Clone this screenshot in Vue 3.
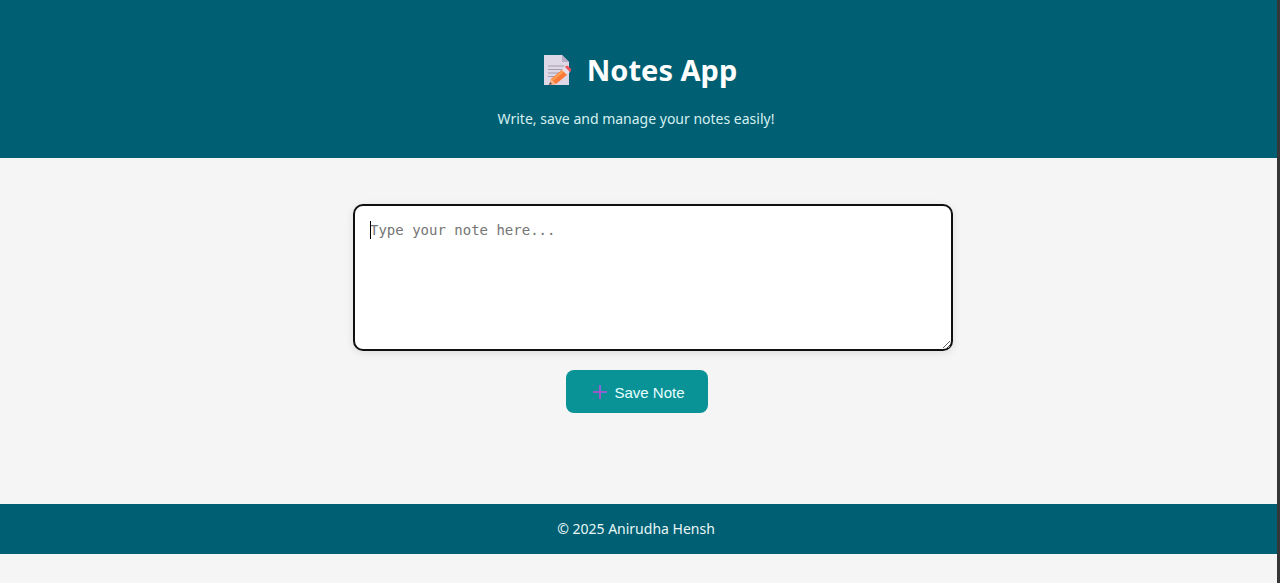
<script setup>
import { ref, onMounted } from 'vue'

const note = ref('')
const notes = ref([])
const editor = ref(null)

function saveNote() {
  const text = note.value.trim()
  if (!text) return
  notes.value.push(text)
  note.value = ''
}

onMounted(() => editor.value.focus())
</script>

<template>
  <div class="page">
    <header class="bar header">
      <h1 class="title">
        <svg class="memo" viewBox="0 0 28 32" aria-hidden="true">
          <path d="M1 1h18l7 7v23H1z" fill="#ded8e6" />
          <path d="M19 1v7h7z" fill="#b9adc6" />
          <path d="M5 12h16M5 15.500h14M5 19h11M5 22.500h7" stroke="#a49bb0" stroke-width="1.200" />
          <path d="M8 25l12-10 5 5-12 10-6 1z" fill="#fb7a3a" />
          <path d="M9.500 26l12-10" stroke="#ffa052" stroke-width="2" />
          <path d="M19 16l3-3 5 5-3 3z" fill="#e6dfea" />
          <path d="M22 13l1-1q1-1 2 0l3 3q1 1 0 2l-1 1z" fill="#f0505a" />
          <path d="M8 25l-2 6 7-1z" fill="#ffb488" />
          <path d="M7 28l-1 3 3-1z" fill="#59445f" />
        </svg>
        <span>Notes App</span>
      </h1>
      <p class="tagline">Write, save and manage your notes easily!</p>
    </header>

    <main class="main">
      <form @submit.prevent="saveNote">
        <div class="field">
          <textarea
            ref="editor"
            v-model="note"
            class="editor"
            aria-label="Note"
            placeholder="Type your note here..."
          ></textarea>
          <span v-if="!note" class="caret"></span>
        </div>
        <button class="save" type="submit">
          <svg class="plus" viewBox="0 0 14 14" aria-hidden="true">
            <path d="M7 0v14M0 7h14" stroke="#9a58c8" stroke-width="2" />
            <path d="M7.500 0v6M8 7.500h6" stroke="#7b6fe0" stroke-width="1" />
          </svg>
          <span>Save Note</span>
        </button>
      </form>
      <ul v-if="notes.length" class="notes">
        <li v-for="(item, i) in notes" :key="i">{{ item }}</li>
      </ul>
    </main>

    <footer class="bar footer">© 2025 Anirudha Hensh</footer>
  </div>
</template>

<style>
body {
  background: #f5f5f5;
}
</style>

<style scoped>
.page {
  min-height: 100vh;
  box-sizing: border-box;
  border-right: 3px solid #363636;
  background: #f5f5f5;
  font-family: "Noto Sans", "Open Sans", sans-serif;
}
.bar {
  background: #005f73;
  color: #fff;
  text-align: center;
  padding-right: 5px;
}
.header {
  padding-top: 48px;
  padding-bottom: 28px;
}
.title {
  display: flex;
  align-items: center;
  justify-content: center;
  gap: 16px;
  margin: 0;
  padding-left: 8px;
  font-size: 29px;
  line-height: 44px;
}
.memo {
  width: 28px;
  height: 32px;
}
.tagline {
  margin: 16px 0 0;
  font-size: 14px;
  line-height: 22px;
  color: #d5f0f0;
}
.main {
  max-width: 568px;
  margin: 0 auto;
  padding: 46px 3px 91px 0;
  text-align: center;
}
.field {
  position: relative;
  display: flex;
  margin-right: -32px;
}
.editor {
  flex: 1;
  box-sizing: border-box;
  height: 147px;
  padding: 15px;
  border: 2px solid #101010;
  border-radius: 10px;
  outline: none;
  background: #fff;
  box-shadow: 0 2px 8px rgba(0, 0, 0, 0.1);
  font-family: "DejaVu Sans Mono", "Liberation Mono", monospace;
  font-size: 14px;
  line-height: 19px;
  caret-color: transparent;
  resize: vertical;
}
.editor::placeholder {
  color: #757575;
}
.caret {
  position: absolute;
  top: 17px;
  left: 17px;
  width: 1px;
  height: 18px;
  background: #000;
}
.save {
  display: inline-flex;
  align-items: center;
  gap: 7px;
  margin-top: 19px;
  padding: 1px 23px 0 27px;
  height: 43px;
  border: 0;
  border-radius: 8px;
  background: #0a9396;
  color: #e9ffff;
  font-family: "Liberation Sans", Arial, sans-serif;
  font-size: 15px;
  cursor: pointer;
}
.plus {
  width: 14px;
  height: 14px;
}
.notes {
  text-align: left;
}
.footer {
  padding-top: 14px;
  padding-bottom: 14px;
  font-size: 14px;
  line-height: 22px;
  color: #e9f7f7;
}
</style>
